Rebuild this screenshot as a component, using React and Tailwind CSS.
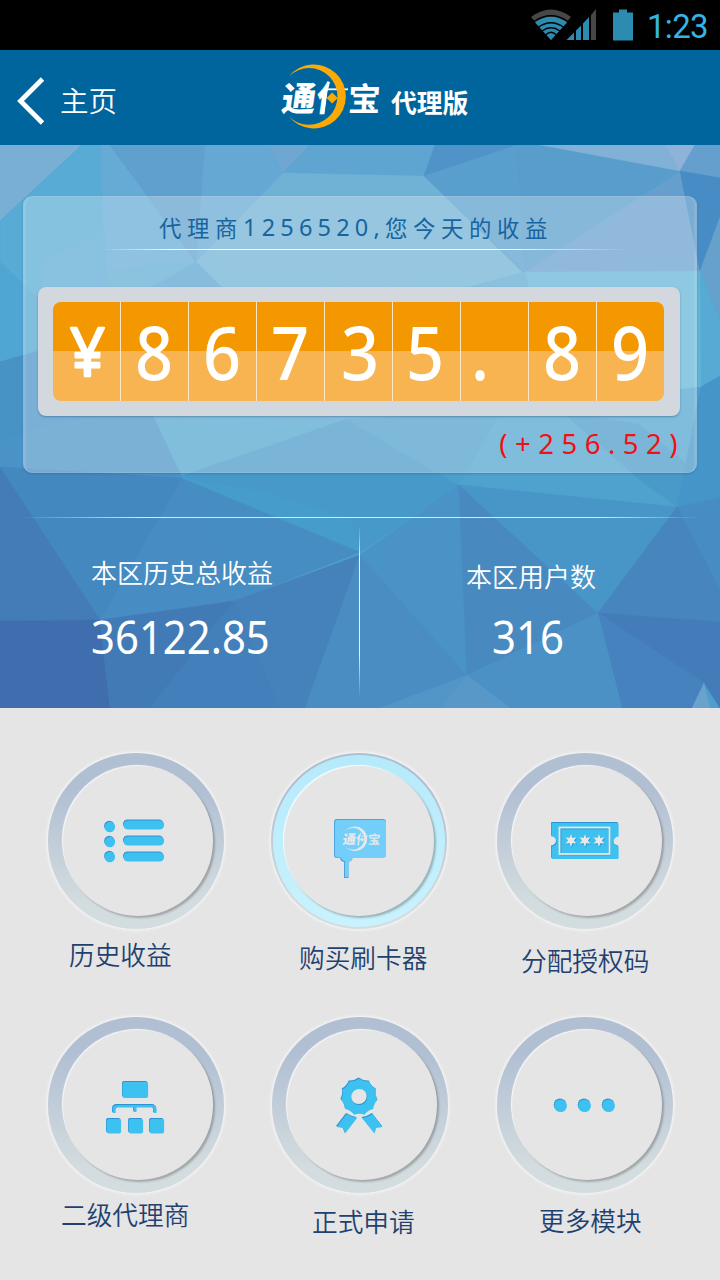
import React from "react";

const CJK = "font-['Noto_Sans_CJK_SC',sans-serif]";
const NUM = "font-['Noto_Sans','Noto_Sans_CJK_SC',sans-serif]";

/* Low-poly backdrop of the hero, drawn in page coordinates (y 145 to 708). */
const facets = [
  ["0,145 82,145 0,221", "#79aed5"],
  ["0,221 82,145 100,145 106,270 50,348 0,362", "#57abd4"],
  ["0,221 0,262 40,300 50,348 0,362", "#50a6d2"],
  ["100,145 110,145 196,262 106,290", "#65abd6"],
  ["106,270 196,262 130,300 90,420 50,348", "#5fabd2"],
  ["40,262 106,230 106,300 50,340", "#5aabd4"],
  ["110,145 205,145 196,262", "#60a0ce"],
  ["205,145 268,145 283,173 196,262", "#66a8d4"],
  ["268,145 310,145 283,173", "#6fa6d2"],
  ["310,145 435,145 424,176 283,173", "#5fa5d2"],
  ["196,262 283,173 424,176 524,274 360,300", "#70b2d5"],
  ["196,262 360,285 524,274 420,300 240,305", "#6cb2d6"],
  ["130,300 196,262 240,305 154,417 90,420", "#5aa3cf"],
  ["435,145 517,145 424,176", "#4f93c8"],
  ["424,176 517,145 525,272", "#599fce"],
  ["517,145 540,145 680,171 525,272", "#589dcc"],
  ["540,145 665,145 680,171", "#82b1d7"],
  ["665,145 695,145 680,171", "#8fb2d8"],
  ["695,145 720,145 720,178 680,171", "#659fce"],
  ["680,171 525,272 700,271", "#669fcd"],
  ["680,171 720,178 720,217 700,271", "#478cc4"],
  ["700,271 720,217 720,320", "#66a1cc"],
  ["700,271 720,320 720,376 701,387", "#56aad3"],
  ["525,272 700,271 701,387 560,420 430,350", "#62b4d6"],
  ["240,305 420,300 525,272 560,420 347,419 154,417", "#5fa9d0"],
  ["0,362 50,348 154,417 182,478 0,467", "#4a93c7"],
  ["50,348 90,417 28,430 0,440 0,362", "#4892c6"],
  ["154,417 347,419 182,476", "#50a5cf"],
  ["182,476 347,419 415,460 459,485 360,552", "#4799c9"],
  ["347,419 501,412 459,485 415,460", "#4d9fcb"],
  ["501,412 700,387 690,460 677,507 459,485", "#4fa2ce"],
  ["560,410 640,425 700,475 677,507 640,480", "#499ac9"],
  ["701,387 720,376 720,498 677,507", "#4695c8"],
  ["0,467 182,478 160,540 100,620", "#4488c0"],
  ["182,478 234,601 100,620", "#478cc2"],
  ["0,467 100,620 0,621", "#447cb8"],
  ["182,478 360,552 234,601", "#468dc3"],
  ["182,478 360,552 350,518 260,490", "#469ccb"],
  ["0,621 100,620 110,708 0,708", "#406dad"],
  ["100,620 234,601 150,708 110,708", "#427ab6"],
  ["234,601 280,708 150,708", "#437fba"],
  ["234,601 360,555 305,708 280,708", "#4582bc"],
  ["360,555 305,708 380,708 467,675", "#4a8dc3"],
  ["459,485 360,555 467,675", "#4993c7"],
  ["459,485 598,613 467,675", "#4889c0"],
  ["459,485 677,507 598,613", "#4896c8"],
  ["677,507 720,498 720,590", "#478cc3"],
  ["677,507 720,590 720,622 598,613", "#4685be"],
  ["598,613 720,622 720,708 704,683", "#437cb9"],
  ["598,613 704,683 692,708 622,708", "#4682bd"],
  ["467,675 598,613 622,708 510,708", "#4c91c5"],
  ["467,675 510,708 440,708", "#5798c8"],
  ["467,675 440,708 380,708", "#5196c7"],
  ["704,683 710,708 692,708", "#68a2cd"],
];

function Backdrop() {
  return (
    <svg className="absolute inset-0 h-full w-full" viewBox="0 145 720 563" preserveAspectRatio="none" aria-hidden="true">
      <rect x="0" y="145" width="720" height="563" fill="#4f9dcb" />
      {facets.map(([points, color]) => (
        <polygon key={points} points={points} fill={color} stroke={color} strokeWidth="0.4" />
      ))}
    </svg>
  );
}

function BrandMark({ className, ink, accent }) {
  const id = React.useId();
  return (
    <svg className={className} viewBox="280 64 102 66" aria-hidden="true">
      <clipPath id={id}>
        <path d="M308 70H333L327.500 92L324 118H308Z" />
      </clipPath>
      <g fill={ink} fontFamily="'Noto Sans CJK SC', sans-serif" fontWeight="900">
        <text transform="translate(280.5 111) skewX(-8)" fontSize="34" fontWeight="800">通</text>
        <g clipPath={`url(#${id})`}>
          <text transform="translate(314.500 111) skewX(-8)" fontSize="35">付</text>
        </g>
        <text transform="translate(347.500 111) skewX(-3)" fontSize="32.500" fontWeight="700">宝</text>
      </g>
      <path d="M327 89.300H348" stroke={ink} strokeWidth="1.800" />
      <path d="M289 76.300A32 32 0 1 1 288.500 116A28.400 28.400 0 1 0 289 76.300Z" fill={accent} />
      <path d="M332.200 92.500L337.700 98L332.200 103.500L326.700 98Z" fill={accent} />
    </svg>
  );
}

function StatusBar() {
  return (
    <div className="flex h-[50px] items-center justify-end bg-black">
      <svg className="h-[50px] w-[110px]" viewBox="530 0 110 50" aria-hidden="true">
        <path d="M531 17Q551 2 571 17L551 40Z" fill="#474747" />
        <path d="M535 22.500Q551 11 567 22.500L551 40Z" fill="#2b8bb1" />
        <g fill="none" stroke="#000" strokeWidth="1.300">
          <path d="M534 21.500Q551 10 568 21.500" />
          <path d="M538 27.500Q551 18 564 27.500" />
          <path d="M542 31Q551 24.500 560 31" />
          <path d="M545.500 35Q551 29.500 556.500 35" />
        </g>
        <path d="M566.500 40L574 32.500V40ZM576 30.500L581 25.500V40H576ZM583 23.500L589 17V40H583Z" fill="#2b8bb1" />
        <path d="M591 15L596 9V40H591Z" fill="#474747" />
        <path d="M613 12.500H619V9.500H627V12.500H633V40.500H613Z" fill="#2b8bb1" />
      </svg>
      <span className="mt-[3px] w-[73px] pl-[7px] font-['Roboto',sans-serif] text-[33px] leading-none tracking-[-0.700px] whitespace-nowrap text-[#33b5e5]">1:23</span>
      <span className="w-[7px]" />
    </div>
  );
}

function Header() {
  return (
    <header className={`flex h-[95px] bg-[#00659c] text-white ${CJK}`}>
      <button className="flex w-[280px] items-center pt-[6px] pl-[17px]">
        <svg className="h-[48px] w-[28px]" viewBox="0 0 28 48" aria-hidden="true">
          <path d="M25.500 2L3.500 24L25.500 46" fill="none" stroke="#fff" strokeWidth="4.800" />
        </svg>
        <span className="ml-[15px] text-[28.500px] leading-none font-[350]">主页</span>
      </button>
      <h1 className="flex items-start pt-[14px]">
        <BrandMark className="h-[66px] w-[102px]" ink="#fff" accent="#fbaa05" />
        <span className="mt-[25px] ml-[9px] text-[25.800px] leading-none font-bold">代理版</span>
      </h1>
    </header>
  );
}

function Tiles() {
  const cells = ["8", "6", "7", "3", "5", ".", "8", "9"];
  const nudge = ["", "", "", "pl-[3px]", "pr-[2px]", "pr-[28px]", "pr-[1px]", ""];
  return (
    <div className="mt-[37px] ml-[12px] w-[642px] rounded-[8px] bg-[#d2d8dd] p-[15px] shadow-[0_1px_2px_rgba(40,90,140,0.5)]">
      <div className={`flex h-[99px] w-[611px] divide-x divide-[#fde7c8] rounded-[8px] bg-linear-to-b from-[#f39801] from-[49.500%] to-[#f8b450] to-[49.500%] text-white ${NUM}`}>
        <span className="flex w-[68px] shrink-0 items-center justify-center">
          <svg className="h-[99px] w-[67px]" viewBox="0 0 67 99">
            <text x="34.500" y="74" textAnchor="middle" fontSize="68" fontWeight="400" fill="#fff" stroke="#fff" strokeWidth="2.400" strokeLinejoin="round" fontFamily="'Noto Sans', sans-serif" textLength="35" lengthAdjust="spacingAndGlyphs">¥</text>
          </svg>
        </span>
        {cells.map((c, i) => (
          <span key={i} className={`flex h-[99px] w-[68px] shrink-0 items-center justify-center text-[74px] leading-[101px] font-medium last:w-[67px] ${nudge[i]}`}>
            <span className="scale-x-90">{c}</span>
          </span>
        ))}
      </div>
    </div>
  );
}

function Stat({ label, value, className, valueClass }) {
  return (
    <div className={className}>
      <p className={`text-[26px] leading-[32px] font-[350] whitespace-nowrap ${CJK}`}>{label}</p>
      <p className={`origin-left scale-x-[0.93] text-[45px] leading-[50px] ${NUM} ${valueClass}`}>{value}</p>
    </div>
  );
}

function Hero() {
  return (
    <section className="relative h-[563px]">
      <Backdrop />
      <div className="relative pt-[51px]">
        <div className="ml-[23px] h-[277px] w-[674px] rounded-[9px] border-x-[3px] border-y border-white/10 bg-white/28 shadow-[0_1px_2px_rgba(30,90,140,0.35)]">
          <p className={`ml-[133px] flex h-[52px] items-center pt-[9px] text-[22.400px] tracking-[5.600px] whitespace-nowrap text-[#17649e] ${CJK}`}>
            代理商<span className={`text-[23.500px] tracking-[5.200px] ${NUM}`}>1256520,</span>您今天的收益
          </p>
          <div className="ml-[74px] h-px w-[530px] bg-[linear-gradient(to_right,transparent,white_15%,white_75%,transparent)]" />
          <Tiles />
          <p className={`mt-[9px] mr-[9px] text-right text-[27.500px] leading-[38px] tracking-[7.500px] text-[#f01015] ${NUM}`}>(+256.52)</p>
        </div>
        <div className="mt-[44px] ml-[20px] h-px w-[680px] bg-[linear-gradient(to_right,transparent,#d5eaf5_18%,#d5eaf5_85%,transparent)]" />
        <div className="flex text-white">
          <Stat className="w-[359px] pt-[38px] pl-[91px]" label="本区历史总收益" value="36122.85" valueClass="mt-[24px]" />
          <div className="mt-[8px] h-[171px] w-px bg-[linear-gradient(to_bottom,transparent,#e5f2f9_18%,#e5f2f9_75%,transparent)]" />
          <Stat className="pt-[42px] pl-[106px]" label="本区用户数" value="316" valueClass="mt-[20px] ml-[26px]" />
        </div>
      </div>
    </section>
  );
}

const SKY = "#3cc1f0";

/* The darker copy beneath each shape gives it an inset top-left edge. */
function Inset({ children }) {
  return (
    <>
      <g fill="#2a93d2" stroke="none">{children}</g>
      <g fill={SKY} transform="translate(0.600 1)">{children}</g>
    </>
  );
}

function ListIcon() {
  return (
    <svg className="h-20 w-20" viewBox="96 801 80 80">
      <Inset>
        {[826, 841, 856].map((y) => <circle key={y} cx="109.300" cy={y} r="5.200" />)}
        {[819.500, 835.500, 851.500].map((y) => <rect key={y} x="123" y={y} width="40.500" height="9" rx="4.500" />)}
      </Inset>
    </svg>
  );
}

function CardReaderIcon() {
  return (
    <span className="grid h-20 w-20">
      <svg className="col-start-1 row-start-1 h-20 w-20" viewBox="320 801 80 80">
        <path d="M337 819H383Q386 819 386 822V854.500Q386 857.500 383 857.500H352.500Q352.500 861 348.500 862V878H344V862Q340 861 340 858H337Q334 858 334 855V822Q334 819 337 819Z" fill="#4aa5dc" />
        <path d="M338 820H383Q386 820 386 823V855Q386 858 383 858H352.500Q352 861 348.500 862V877H345V861Q341.500 860 341 857.500H338Q335 857.500 335 854.500V823Q335 820 338 820Z" fill="#73cff9" />
      </svg>
      <BrandMark className="col-start-1 row-start-1 mt-[25px] ml-[22px] h-[26px] w-[39px]" ink="#e3e8ec" accent="#e3e8ec" />
    </span>
  );
}

function TicketIcon() {
  const star = (cx) => {
    const pts = [];
    for (let i = 0; i < 12; i++) {
      const r = i % 2 ? 2.900 : 6.300;
      const a = (Math.PI / 6) * i - Math.PI / 2;
      pts.push(`${(cx + r * Math.cos(a)).toFixed(2)},${(840.500 + r * Math.sin(a)).toFixed(2)}`);
    }
    return pts.join(" ");
  };
  return (
    <svg className="h-20 w-20" viewBox="545 801 80 80">
      <Inset>
        <path d="M552 822H617Q618 822 618 823V835.500A5 5 0 0 0 618 845.500V857Q618 858 617 858H552Q551 858 551 857V845.500A5 5 0 0 0 551 835.500V823Q551 822 552 822Z" />
      </Inset>
      <rect x="560.500" y="828.500" width="49" height="26" fill="none" stroke="#2b9fd8" strokeWidth="1.800" />
      <rect x="559.500" y="827.500" width="50" height="26.500" fill="none" stroke="#e6e6e6" strokeWidth="1.800" />
      {[571, 585, 599].map((cx) => (
        <g key={cx}>
          <polygon points={star(cx)} fill="#2b9fd8" transform="translate(0.800 1)" />
          <polygon points={star(cx)} fill="#e8e8e8" />
        </g>
      ))}
    </svg>
  );
}

function HierarchyIcon() {
  return (
    <svg className="h-20 w-20" viewBox="96 1065 80 80">
      <Inset>
        <rect x="122" y="1081" width="25.500" height="16" rx="2" />
        <path d="M112 1112V1108.500Q112 1104 116.500 1104H151.500Q156 1104 156 1108.500V1112H153V1109Q153 1106.500 151 1106.500H136V1111H133V1106.500H117Q115 1106.500 115 1109V1112Z" />
        <rect x="106" y="1118" width="14.500" height="14.500" rx="2" />
        <rect x="128" y="1118" width="14.500" height="14.500" rx="2" />
        <rect x="149" y="1118" width="14.500" height="14.500" rx="2" />
      </Inset>
    </svg>
  );
}

function RibbonIcon() {
  const n = 11;
  const cx = 358.700;
  const cy = 1096;
  let d = "";
  for (let i = 0; i <= n; i++) {
    const a = ((Math.PI * 2) / n) * i - Math.PI / 2;
    const m = a - Math.PI / n;
    const p = `${(cx + 18.500 * Math.cos(a)).toFixed(2)} ${(cy + 18.500 * Math.sin(a)).toFixed(2)}`;
    const q = `${(cx + 15.800 * Math.cos(m)).toFixed(2)} ${(cy + 15.800 * Math.sin(m)).toFixed(2)}`;
    d += i === 0 ? `M${p}` : `Q${q} ${p}`;
  }
  const hole = "M366.700 1096a8 8 0 1 0 -16 0a8 8 0 1 0 16 0Z";
  return (
    <svg className="h-20 w-20" viewBox="320 1065 80 80">
      <Inset>
        <path fillRule="evenodd" d={`${d}Z${hole}`} />
        <path d="M346 1113Q351 1116 356.500 1117L344.500 1132.500L342.500 1127L336 1126Z" />
        <path d="M372 1113Q367 1116.500 361.500 1117L374 1132.500L375.500 1127L382 1126Z" />
      </Inset>
    </svg>
  );
}

function MoreIcon() {
  return (
    <svg className="h-20 w-20" viewBox="545 1065 80 80">
      <Inset>
        {[560, 584, 608].map((cx) => <circle key={cx} cx={cx} cy="1104.800" r="6.300" />)}
      </Inset>
    </svg>
  );
}

const modules = [
  { label: "历史收益", Icon: ListIcon, text: "ml-[21px] mt-[9px]", cell: "" },
  { label: "购买刷卡器", Icon: CardReaderIcon, text: "ml-[28px] mt-[12px]", cell: "-ml-px", active: true },
  { label: "分配授权码", Icon: TicketIcon, text: "ml-[24px] mt-[15px]", cell: "" },
  { label: "二级代理商", Icon: HierarchyIcon, text: "ml-[13px] mt-[5px]", cell: "" },
  { label: "正式申请", Icon: RibbonIcon, text: "ml-[40px] mt-[12px]", cell: "" },
  { label: "更多模块", Icon: MoreIcon, text: "ml-[42px] mt-[11px]", cell: "" },
];

function Module({ label, Icon, text, cell, active }) {
  return (
    <button className={`flex w-[176px] flex-col items-start ${cell}`}>
      <span className="flex h-[176px] w-[176px] rounded-full bg-linear-to-b from-[#b1bfd3] from-20% to-[#d3dcde] to-85% p-[2px] shadow-[0_0_3px_1.500px_rgba(255,255,255,0.6)]">
        <span className={`flex h-[172px] w-[172px] rounded-full pt-[11px] ${active ? "bg-linear-to-b from-[#b5eafb] to-[#c9f2fd] pl-[11px]" : "pl-[12.500px]"}`}>
          <span className="flex h-[150px] w-[150px] items-center justify-center rounded-full bg-[#e5e5e5] shadow-[2px_2px_2px_rgba(90,90,90,0.4),-1px_-1px_1px_rgba(255,255,255,0.9)]">
            <span className={active ? "pl-[1px]" : "pr-[3px]"}><Icon /></span>
          </span>
        </span>
      </span>
      <span className={`text-[25.700px] leading-[32px] font-[350] whitespace-nowrap text-[#1f4170] ${CJK} ${text}`}>{label}</span>
    </button>
  );
}

export default function App() {
  return (
    <div className="h-[1280px] w-[720px] overflow-hidden bg-[#e5e5e5]">
      <StatusBar />
      <Header />
      <Hero />
      <main className="grid grid-cols-[224px_225px_176px] grid-rows-[264px_264px] pt-[45px] pl-[48px]">
        {modules.map((m) => (
          <Module key={m.label} {...m} />
        ))}
      </main>
    </div>
  );
}
